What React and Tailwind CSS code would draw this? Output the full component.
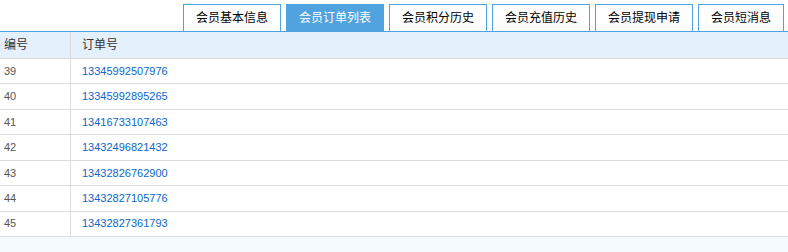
import React from "react";

const tabs = ["会员基本信息", "会员订单列表", "会员积分历史", "会员充值历史", "会员提现申请", "会员短消息"];
const rows = [
  ["39", "13345992507976"],
  ["40", "13345992895265"],
  ["41", "13416733107463"],
  ["42", "13432496821432"],
  ["43", "13432826762900"],
  ["44", "13432827105776"],
  ["45", "13432827361793"],
];

const font = { fontFamily: '"Liberation Sans","Noto Sans CJK SC",sans-serif' };

export default function App() {
  return (
    <div className="w-[788px] h-[252px] bg-white overflow-hidden text-[12px]" style={font}>
      <div className="flex justify-end gap-[5px] pt-[4px] pr-[4px] border-b border-[#51a3e0] h-[32px]">
        {tabs.map((t, i) => (
          <div
            key={t}
            className={
              "h-[27px] px-3 flex items-center justify-center border border-b-0 leading-none " +
              (i === 1
                ? "bg-[#51a3e0] border-[#51a3e0] text-white"
                : "bg-white border-[#51a3e0] text-black")
            }
          >
            {t}
          </div>
        ))}
      </div>
      <div className="flex h-[27px] bg-[#e4f0fc] border-b border-[#d8d8d8] text-[#333]">
        <div className="w-[71px] border-r border-[#dcdcdc] pl-[4px] flex items-center">编号</div>
        <div className="flex-1 pl-[11px] flex items-center">订单号</div>
      </div>
      {rows.map(([id, no]) => (
        <div key={id} className="flex h-[25.43px] border-b border-[#dcdcdc] bg-white">
          <div className="w-[71px] border-r border-[#dcdcdc] pl-[4px] flex items-center text-[11px] text-[#555]">{id}</div>
          <div className="flex-1 pl-[11px] flex items-center text-[11px] text-[#0a67c9]">{no}</div>
        </div>
      ))}
      <div className="h-[20px] bg-[#f5faff]" />
    </div>
  );
}
